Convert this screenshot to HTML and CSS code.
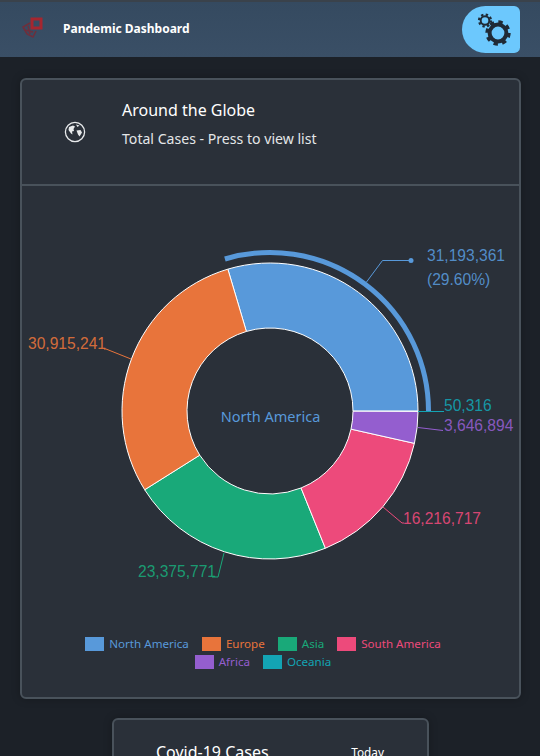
FILE: index.html
```html
<!DOCTYPE html>
<html lang="en">
<head>
  <meta charset="UTF-8">
  <title>Pandemic Dashboard</title>
  <link rel="stylesheet" href="styles.css">
</head>
<body>

  <!-- top bar -->
  <header class="shell-bar">
    <div class="brand">
      <svg class="brand-logo" viewBox="0 0 24 24" width="24" height="24" fill="none" stroke="#6e2f3c" stroke-width="1.6">
        <rect x="12" y="3" width="9" height="9" stroke="#a5262f" stroke-width="3"/>
        <path d="M10 7 L3 11 L7 18 L13 21 L16 15"/>
        <path d="M5 14 L13 16 M8 10 L10 18"/>
      </svg>
      <span class="brand-title">Pandemic Dashboard</span>
    </div>
    <button class="settings-btn" type="button" aria-label="Settings">
      <svg viewBox="0 0 58 47" width="58" height="47" fill="none" stroke="#1f2a36">
        <circle cx="23" cy="14.5" r="4.3" stroke-width="2"/>
        <circle cx="23" cy="14.5" r="6" stroke-width="2.2" stroke-dasharray="2.36 2.35"/>
        <circle cx="36" cy="27" r="8.4" stroke-width="4"/>
        <circle cx="36" cy="27" r="11" stroke-width="3.4" stroke-dasharray="4.32 4.32"/>
      </svg>
    </button>
  </header>

  <main class="page">

    <section class="card globe-card">
      <div class="card-head">
        <div class="card-icon">
          <svg viewBox="0 0 22 22" width="22" height="22">
            <circle cx="11" cy="11" r="9.6" fill="none" stroke="#e8eaec" stroke-width="1.3"/>
            <path fill="#e8eaec" d="M5 6 L9 4.5 L11 5.5 L9.5 8 L10 10 L8 10.5 L8.5 13.5 L7 12.5 L4.5 9 z M12.5 9.5 L16.5 9 L18 11.5 L15.5 15.5 L14 13.5 z M12 3.5 L15.5 4.5 L13.5 6 z"/>
          </svg>
        </div>
        <div class="card-titles">
          <div class="card-title">Around the Globe</div>
          <div class="card-sub">Total Cases - Press to view list</div>
        </div>
      </div>

      <div class="chart-area">
        <svg class="donut" width="497" height="450" viewBox="22 186 497 450">
          <!-- slices -->
          <g stroke="#fff" stroke-width="1" stroke-linejoin="round">
            <path fill="#5899da" d="M227.85 269.13 A148 148 0 0 1 418 411 L353 411 A83 83 0 0 0 246.36 331.44 Z"/>
            <path fill="#19a979" d="M325.38 548.24 A148 148 0 0 1 144.69 489.74 L199.72 455.16 A83 83 0 0 0 301.06 487.97 Z"/>
            <path fill="#e8743b" d="M144.69 489.74 A148 148 0 0 1 227.85 269.13 L246.36 331.44 A83 83 0 0 0 199.72 455.16 Z"/>
            <path fill="#ed4a7b" d="M414.42 443.35 A148 148 0 0 1 325.38 548.24 L301.06 487.97 A83 83 0 0 0 351 429.14 Z"/>
            <path fill="#945ecf" d="M418 411.44 A148 148 0 0 1 414.42 443.35 L351 429.14 A83 83 0 0 0 353 411.25 Z"/>
          </g>
          <!-- highlight arc on the selected slice -->
          <path d="M224.9 259 A158.5 158.5 0 0 1 428.5 411" fill="none" stroke="#5899da" stroke-width="5"/>

          <!-- label lines -->
          <g fill="none" stroke-width="1">
            <path stroke="#5899da" d="M366.5 282 L382.5 260.5 L411 260.5"/>
            <path stroke="#13a4b4" d="M418 411.5 L444 411.5"/>
            <path stroke="#945ecf" d="M418 427.5 L443 430.5"/>
            <path stroke="#ed4a7b" d="M383 507 L402 523 L404 523"/>
            <path stroke="#19a979" d="M224 553 L218 577 L212 577"/>
            <path stroke="#e8743b" d="M131 359 L106 349 L104 349"/>
          </g>
          <circle cx="411" cy="260.5" r="2.5" fill="#5899da"/>

          <!-- labels -->
          <g class="pie-label">
            <text x="427" y="261" fill="#5899da">31,193,361</text>
            <text x="427" y="285" fill="#5899da">(29.60%)</text>
            <text x="444" y="411" fill="#13a4b4">50,316</text>
            <text x="444" y="431" fill="#945ecf">3,646,894</text>
            <text x="403" y="524" fill="#ed4a7b">16,216,717</text>
            <text x="138" y="577" fill="#19a979">23,375,771</text>
            <text x="28" y="349" fill="#e8743b">30,915,241</text>
          </g>
          <text class="center-label" x="270.5" y="422" text-anchor="middle" fill="#5899da">North America</text>
        </svg>
      </div>

      <div class="legend">
        <div class="legend-row">
          <span class="legend-item na"><i></i>North America</span>
          <span class="legend-item eu"><i></i>Europe</span>
          <span class="legend-item as"><i></i>Asia</span>
          <span class="legend-item sa"><i></i>South America</span>
        </div>
        <div class="legend-row">
          <span class="legend-item af"><i></i>Africa</span>
          <span class="legend-item oc"><i></i>Oceania</span>
        </div>
      </div>
    </section>

    <section class="card cases-card">
      <div class="cases-head">
        <span class="cases-title">Covid-19 Cases</span>
        <span class="cases-today">Today</span>
      </div>
    </section>

  </main>

</body>
</html>
```

FILE: styles.css
```css
html, body {
  margin: 0;
  height: 756px;
  overflow: hidden;
}

body {
  font-family: "Noto Sans", "Open Sans", sans-serif;
  background-color: #1c2128;
  color: #fff;
}

/* top bar */
.shell-bar {
  height: 57px;
  box-sizing: border-box;
  display: flex;
  justify-content: space-between;
  align-items: center;
  padding: 0 20px;
  background: linear-gradient(#354a60, #3a4f66);
  border-top: 2px solid #3a424b;
}

.brand {
  display: flex;
  align-items: center;
  gap: 19px;
  margin-bottom: 3px;
}

.brand-logo {
  display: block;
}

.brand-title {
  font-size: 12px;
  font-weight: 700;
}

.settings-btn {
  width: 58px;
  height: 47px;
  padding: 0;
  border: none;
  border-radius: 24px 6px 6px 24px;
  background-color: #6cc8fd;
}

.settings-btn svg {
  display: block;
}

/* cards */
.page {
  display: flex;
  flex-direction: column;
  align-items: center;
  gap: 19px;
  padding: 21px 0 0 1px;
}

.card {
  box-sizing: border-box;
  background-color: #2a3039;
  border: 2px solid #49525b;
  border-radius: 6px;
  box-shadow: 0 0 8px rgba(0, 0, 0, 0.25);
  flex-shrink: 0;
}

.globe-card {
  width: 501px;
  height: 621px;
}

.card-head {
  height: 104px;
  display: flex;
  align-items: center;
  border-bottom: 2px solid #49525b;
}

.card-icon {
  width: 100px;
  display: flex;
  justify-content: center;
  padding-left: 5px;
  box-sizing: border-box;
}

.card-titles {
  padding-bottom: 18px;
}

.card-title {
  font-size: 16px;
  margin-bottom: 8px;
}

.card-sub {
  font-size: 14.1px;
  color: #e4e6e8;
}

.chart-area {
  height: 450px;
}

.donut {
  display: block;
}

.pie-label text {
  font-family: "Liberation Sans", Arial, sans-serif;
  font-size: 15.6px;
  fill-opacity: 0.9;
}

.center-label {
  font-family: "Noto Sans", sans-serif;
  font-size: 14.5px;
}

/* legend */
.legend {
  display: flex;
  flex-direction: column;
  align-items: center;
  gap: 3px;
  padding-right: 15px;
}

.legend-row {
  display: flex;
  gap: 13px;
  height: 15px;
}

.legend-item {
  display: flex;
  align-items: center;
  gap: 5px;
  font-size: 11.6px;
}

.legend-item i {
  width: 19px;
  height: 14px;
  background-color: currentColor;
}

.na { color: #5899da; }
.eu { color: #e8743b; }
.as { color: #19a979; }
.sa { color: #ed4a7b; }
.af { color: #945ecf; }
.oc { color: #13a4b4; }

.cases-card {
  width: 317px;
  height: 200px;
}

.cases-head {
  display: flex;
  justify-content: space-between;
  padding: 21px 43px 0 42px;
}

.cases-title {
  font-size: 16px;
}

.cases-today {
  font-size: 11.8px;
  padding-top: 3px;
}
```
